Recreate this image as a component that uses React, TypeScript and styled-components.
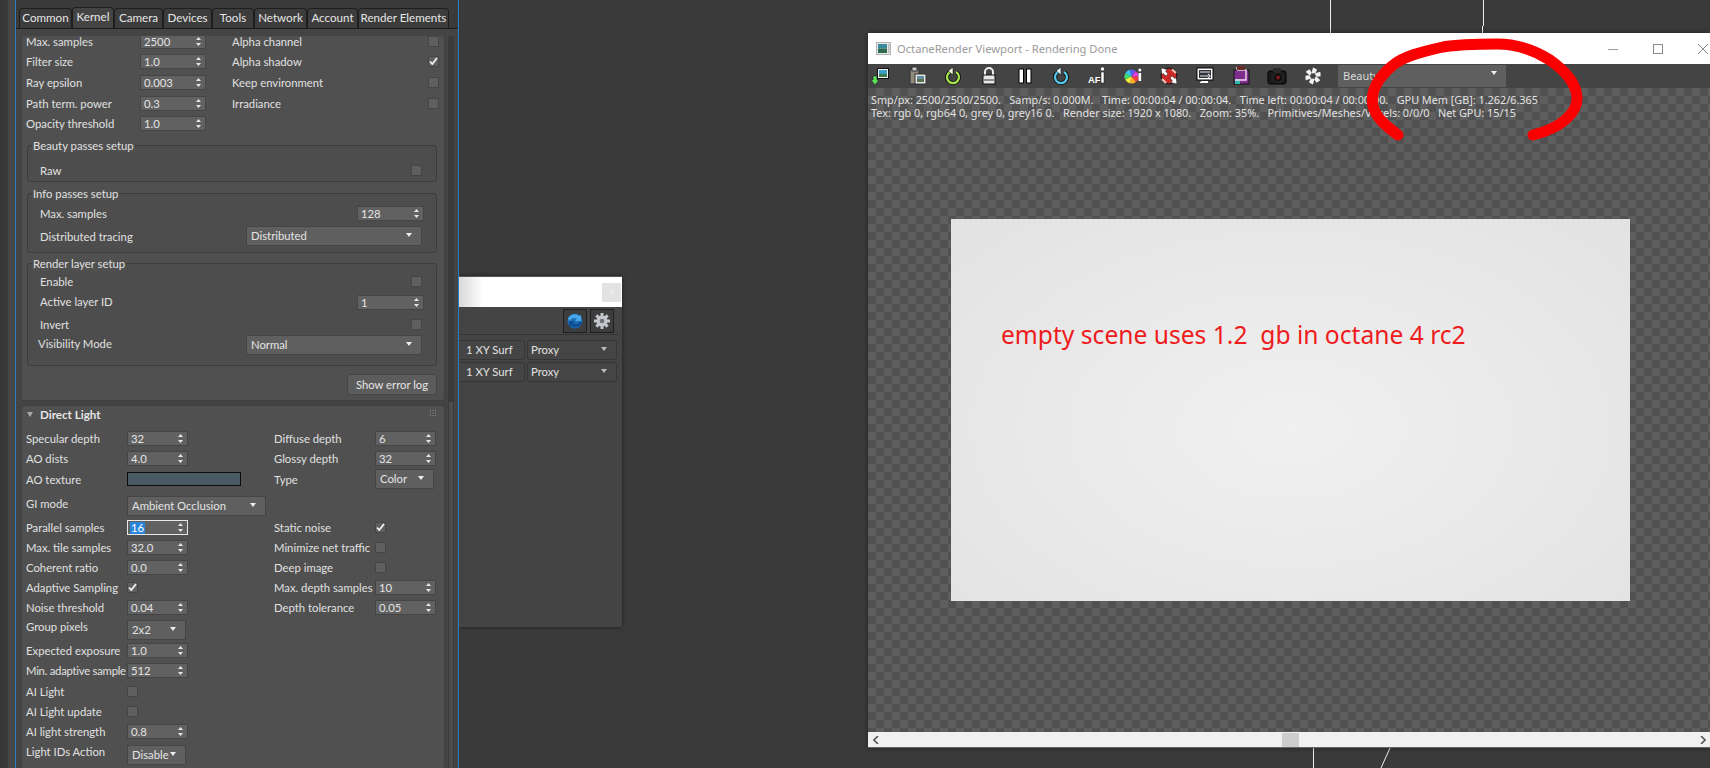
import React from "react";
import styled, { createGlobalStyle } from "styled-components";

const Global = createGlobalStyle`
  html, body { margin: 0; padding: 0; width: 1710px; height: 768px; overflow: hidden; background: #3a3a3a; }
  #root { width: 1710px; height: 768px; }
  * { box-sizing: border-box; }
`;

const Desktop = styled.div`
  position: relative;
  width: 1710px;
  height: 768px;
  overflow: hidden;
  background: #3a3a3a;
  font-family: "Lato", "Noto Sans", sans-serif;
  font-size: 11.3px;
  color: #e0e0e0;
`;

const Wires = styled.svg`
  position: absolute;
  inset: 0;
  width: 1710px;
  height: 768px;
`;

const Scribble = styled.svg`
  position: absolute;
  inset: 0;
  width: 1710px;
  height: 768px;
  pointer-events: none;
  z-index: 3;
`;

/* ---------- command panel ---------- */
const PanelWindow = styled.div`
  position: absolute;
  left: 0;
  top: 0;
  width: 459px;
  height: 768px;
  display: flex;
  z-index: 2;
`;

const Gutter = styled.div`
  width: 15px;
  background: linear-gradient(90deg, #353535 0, #3a3a3a 8px, #464646 8px, #464646 100%);
`;

const PanelInner = styled.div`
  flex: 1;
  min-width: 0;
  display: flex;
  flex-direction: column;
  background: #444;
  border-left: 1px solid #2b7dc4;
  border-right: 1px solid #2b7dc4;
`;

const TabBar = styled.div`
  height: 29px;
  flex: none;
  display: flex;
  align-items: flex-end;
  padding-left: 3px;
  background: #3a3a3a;
  border-bottom: 1px solid #1e1e1e;
`;

const Tab = styled.div<{ $w: number; $active?: boolean }>`
  width: ${(p) => p.$w}px;
  height: ${(p) => (p.$active ? 21 : 20)}px;
  line-height: 17px;
  text-align: center;
  font-size: 11.6px;
  color: #e6e6e6;
  white-space: nowrap;
  background: ${(p) => (p.$active ? "#444" : "#3c3c3c")};
  border: 1px solid #1e1e1e;
  border-bottom: none;
  border-radius: 4px 4px 0 0;
`;

const PanelBody = styled.div`
  flex: 1;
  min-height: 0;
  display: flex;
  padding: 7px 0 0 5px;
  overflow: hidden;
`;

const RolloutStack = styled.div`
  width: 424px;
  flex: none;
  display: flex;
  flex-direction: column;
  gap: 4px;
`;

const Rollout = styled.div`
  flex: none;
  background: #505050;
  border: 1px solid #404040;
  border-radius: 3px;
  overflow: hidden;
`;

const TopRollout = styled(Rollout)`
  border-top: none;
  padding: 0 0 5px 0;
`;

const BottomRollout = styled(Rollout)`
  flex: 1;
  border-bottom: none;
`;

const ClippedTop = styled.div`
  margin-top: -5px;
  padding-left: 4px;
`;

const ScrollTrack = styled.div`
  width: 6px;
  flex: none;
  margin-left: 3px;
  background: #3a3a3a;
  position: relative;
`;

const ScrollThumb = styled.div`
  position: absolute;
  left: 1px;
  top: 366px;
  width: 4px;
  height: 400px;
  background: #4d4d4d;
`;

const Row = styled.div<{ $h: number; $cols: string }>`
  height: ${(p) => p.$h}px;
  display: grid;
  grid-template-columns: ${(p) => p.$cols};
  align-items: center;
`;

const Label = styled.div`
  white-space: nowrap;
  color: #e0e0e0;
  line-height: 14px;
  padding-top: 1px;
`;

const TightLabel = styled(Label)`
  letter-spacing: -0.25px;
`;

const Nudged = styled(Label)<{ $y: number; $x?: number }>`
  margin-top: ${(p) => p.$y}px;
  margin-left: ${(p) => p.$x ?? 0}px;
`;

const SpinBox = styled.div<{ $focus?: boolean }>`
  position: relative;
  height: 15px;
  line-height: 13px;
  padding-left: 3px;
  background: #616161;
  border: 1px solid ${(p) => (p.$focus ? "#e8e8e8" : "#454545")};
  color: #e4e4e4;
  white-space: nowrap;
`;

const SpinArrows = styled.svg`
  position: absolute;
  right: 4px;
  top: 2px;
  width: 5px;
  height: 9px;
`;

const Selected = styled.span`
  display: inline-block;
  background: #2a86d8;
  color: #fff;
  line-height: 12px;
  padding: 0 1px;
  margin-left: -1px;
`;

const Spinner = ({ value, focus }: { value: string; focus?: boolean }) => (
  <SpinBox $focus={focus}>
    {focus ? <Selected>{value}</Selected> : value}
    <SpinArrows viewBox="0 0 5 9">
      <path d="M2.5 0 5 3H0zM0 6h5L2.5 9z" fill="#e6e6e6" />
    </SpinArrows>
  </SpinBox>
);

const DropBox = styled.div<{ $mt?: number }>`
  position: relative;
  height: 20px;
  margin-top: ${(p) => p.$mt ?? 0}px;
  line-height: 18px;
  padding-left: 4px;
  background: #5f5f5f;
  border: 1px solid #454545;
  color: #e4e4e4;
  white-space: nowrap;
`;

const DropArrow = styled.svg`
  position: absolute;
  right: 9px;
  top: 6px;
  width: 6px;
  height: 4px;
`;

const Dropdown = ({ value, mt }: { value: string; mt?: number }) => (
  <DropBox $mt={mt}>
    {value}
    <DropArrow viewBox="0 0 6 4">
      <path d="M0 0h6L3 4z" fill="#eee" />
    </DropArrow>
  </DropBox>
);

const CheckBox = styled.div<{ $end?: boolean }>`
  width: 11px;
  height: 11px;
  display: flex;
  align-items: center;
  justify-content: center;
  background: #5f5f5f;
  border: 1px solid #454545;
  justify-self: ${(p) => (p.$end ? "end" : "start")};
  margin-right: ${(p) => (p.$end ? "2px" : "0")};
`;

const Tick = styled.svg`
  width: 9px;
  height: 8px;
`;

const Check = ({ on, end }: { on?: boolean; end?: boolean }) => (
  <CheckBox $end={end}>
    {on && (
      <Tick viewBox="0 0 9 8">
        <path d="M1 4.5 3.3 7 8 1" fill="none" stroke="#f2f2f2" strokeWidth="1.8" />
      </Tick>
    )}
  </CheckBox>
);

const GroupBox = styled.div<{ $mt: number; $pt: number; $pb: number }>`
  position: relative;
  margin: ${(p) => p.$mt}px 7px 0 5px;
  padding: ${(p) => p.$pt}px 12px ${(p) => p.$pb}px 12px;
  border: 1px solid #3c3c3c;
  border-radius: 3px;
  background: #4d4d4d;
`;

const GroupTitle = styled.div`
  position: absolute;
  top: -7px;
  left: 4px;
  padding: 0 1px;
  line-height: 14px;
  background: #505050;
  color: #e0e0e0;
  white-space: nowrap;
`;

const EndSpin = styled.div`
  width: 67px;
  justify-self: end;
`;

const EndDrop = styled.div`
  width: 176px;
  justify-self: end;
  margin-right: 2px;
`;

const ButtonRow = styled.div`
  display: flex;
  justify-content: flex-end;
  margin: 8px 7px 0 0;
`;

const ErrorButton = styled.div`
  width: 90px;
  height: 21px;
  line-height: 19px;
  text-align: center;
  background: #5c5c5c;
  border: 1px solid #464646;
  border-radius: 3px;
  color: #e4e4e4;
  white-space: nowrap;
`;

const RolloutHeader = styled.div`
  height: 22px;
  display: flex;
  align-items: center;
  padding: 0 8px 5px 4px;
`;

const Triangle = styled.svg`
  width: 6px;
  height: 5px;
  margin-left: 1px;
`;

const RolloutTitle = styled.div`
  margin-left: 7px;
  font-weight: 700;
  color: #e6e6e6;
  font-size: 11.6px;
`;

const Grip = styled.svg`
  margin-left: auto;
  margin-top: -4px;
  width: 6px;
  height: 6px;
`;

const Columns = styled.div`
  display: grid;
  grid-template-columns: 248px 1fr;
  padding-left: 4px;
`;

const ColorSwatch = styled.div`
  width: 114px;
  height: 14px;
  background: #4a5a63;
  border: 1px solid #0c0c0c;
`;

const leftCols = "101px 61px";
const topCols = "114px 66px 26px 196px 11px";
const groupCols = "1fr auto";

/* ---------- rear dialog ---------- */
const RearDialog = styled.div`
  position: absolute;
  left: 459px;
  top: 276px;
  width: 163px;
  height: 351px;
  background: #444;
  border-top: 1px solid #555;
  box-shadow: 0 0 4px rgba(0, 0, 0, 0.5);
  z-index: 1;
  display: flex;
  flex-direction: column;
`;

const RearTitle = styled.div`
  height: 30px;
  flex: none;
  display: flex;
  justify-content: flex-end;
  align-items: center;
  padding: 0 1px 0 0;
  background: linear-gradient(90deg, #d8d8d8 0, #fff 24px);
`;

const RearClose = styled.div`
  width: 19px;
  height: 19px;
  line-height: 17px;
  text-align: center;
  font-size: 10px;
  background: #e2e2e2;
  color: #f2f2f2;
`;

const RearTools = styled.div`
  height: 28px;
  flex: none;
  display: flex;
  justify-content: flex-end;
  align-items: center;
  gap: 3px;
  margin-right: 4px;
  padding-right: 4px;
  border-bottom: 1px solid #343434;
`;

const RearButton = styled.div`
  width: 24px;
  height: 24px;
  display: flex;
  align-items: center;
  justify-content: center;
  background: #3d3d3d;
  border: 1px solid #1f1f1f;
`;

const RearRows = styled.div`
  display: flex;
  flex-direction: column;
  gap: 2px;
  padding-top: 5px;
`;

const RearRow = styled.div`
  display: flex;
  gap: 2px;
  height: 20px;
`;

const SurfField = styled.div`
  width: 66px;
  line-height: 18px;
  padding-left: 7px;
  background: #454545;
  border: 1px solid #363636;
  border-left: none;
  border-radius: 0 3px 3px 0;
  white-space: nowrap;
  color: #e2e2e2;
`;

const ProxyField = styled.div`
  position: relative;
  width: 90px;
  line-height: 18px;
  padding-left: 3px;
  background: #454545;
  border: 1px solid #363636;
  border-radius: 3px;
  color: #e2e2e2;
`;

/* ---------- viewport window ---------- */
const ViewportWindow = styled.div`
  position: absolute;
  left: 868px;
  top: 33px;
  width: 842px;
  height: 715px;
  display: flex;
  flex-direction: column;
  overflow: hidden;
  z-index: 1;
  box-shadow: 0 0 5px rgba(0, 0, 0, 0.45);
  font-family: "Noto Sans", sans-serif;
`;

const TitleBar = styled.div`
  height: 31px;
  flex: none;
  background: #fff;
  display: flex;
  align-items: center;
  padding-left: 8px;
`;

const TitleText = styled.div`
  margin-left: 6px;
  color: #9a9a9a;
  font-size: 11.2px;
  white-space: nowrap;
`;

const WinButtons = styled.div`
  margin-left: auto;
  margin-right: -15px;
  display: flex;
`;

const WinButton = styled.div`
  width: 45px;
  height: 31px;
  display: flex;
  align-items: center;
  justify-content: center;
`;

const Toolbar = styled.div`
  height: 24px;
  flex: none;
  background: #444;
  display: flex;
  align-items: center;
  gap: 16px;
  padding-left: 3px;
`;

const ToolIcon = styled.svg`
  width: 20px;
  height: 20px;
  flex: none;
`;

const PassSelect = styled.div`
  position: relative;
  width: 168px;
  height: 22px;
  margin-left: -1px;
  line-height: 21px;
  padding-left: 5px;
  background: #5f5f5f;
  color: #d8d8d8;
  font-size: 11px;
`;

const Stage = styled.div`
  flex: 1;
  min-height: 0;
  padding: 5px 0 0 3px;
  background-color: #515151;
  background-image: conic-gradient(#5e5e5e 25%, transparent 0 50%, #5e5e5e 0 75%, transparent 0);
  background-size: 16px 16px;
`;

const StatusLine = styled.div`
  height: 13px;
  line-height: 13px;
  font-size: 10.84px;
  color: #e2e2e2;
  white-space: pre;
`;

const RenderCanvas = styled.div`
  width: 679px;
  height: 382px;
  margin: 100px 0 0 80px;
  padding: 101px 0 0 50px;
  background: radial-gradient(ellipse at 50% 55%, #f0f0f0 0, #eaeaea 45%, #e2e2e2 100%);
`;

const Note = styled.div`
  color: #ee1c1c;
  font-size: 24.6px;
  line-height: 30px;
  white-space: pre;
`;

const HScroll = styled.div`
  position: relative;
  height: 16px;
  flex: none;
  background: #f0f0f0;
  border-bottom: 1px solid #666;
  display: flex;
  align-items: center;
  justify-content: space-between;
  padding: 0 4px 0 5px;
`;

const HThumb = styled.div`
  position: absolute;
  left: 414px;
  top: 1px;
  width: 17px;
  height: 14px;
  background: #cdcdcd;
`;

const ScrollArrow = styled.svg`
  width: 6px;
  height: 8px;
`;

const slices = ["#ff3b3b", "#ffb02e", "#f7f03a", "#45e06a", "#35c8f0", "#5a5af5", "#e23de0"];
const wheelPath = (i: number, n: number) => {
  const c = 8.5, r = 7;
  const a0 = (i / n) * Math.PI * 2, a1 = ((i + 1) / n) * Math.PI * 2;
  return `M${c} ${c + 2}L${c + r * Math.cos(a0)} ${c + 2 + r * Math.sin(a0)}A${r} ${r} 0 0 1 ${c + r * Math.cos(a1)} ${c + 2 + r * Math.sin(a1)}Z`;
};

const Icons = {
  Export: () => (
    <ToolIcon viewBox="0 0 20 20">
      <rect x="6.5" y="2.5" width="11" height="10" fill="#f4f4f4" stroke="#111" />
      <rect x="8" y="4" width="8" height="4" fill="#3aa0c8" />
      <rect x="8" y="8" width="8" height="3" fill="#3f7a4a" />
      <path d="M2 10h4v4h2l-4 5-4-5h2z" fill="#5fe05a" stroke="#111" strokeWidth=".5" />
    </ToolIcon>
  ),
  Paste: () => (
    <ToolIcon viewBox="0 0 20 20">
      <rect x="3" y="3" width="9" height="15" fill="#8f8a7c" stroke="#2c2c2c" />
      <rect x="5" y="1" width="5" height="4" fill="#ccc" stroke="#333" />
      <rect x="8" y="8" width="11" height="10" fill="#e4e4e4" stroke="#333" />
      <rect x="10" y="10" width="7" height="3" fill="#5f8ea0" />
      <rect x="10" y="13" width="7" height="3" fill="#57704e" />
    </ToolIcon>
  ),
  RedoGreen: () => (
    <ToolIcon viewBox="0 0 20 20">
      <path d="M7 6a6 6 0 1 0 6 0" fill="none" stroke="#111" strokeWidth="4" />
      <path d="M7 6a6 6 0 1 0 6 0" fill="none" stroke="#a6e84a" strokeWidth="2.2" />
      <path d="M10 1v8L5 5z" fill="#eaf7d0" stroke="#111" strokeWidth=".6" />
    </ToolIcon>
  ),
  Lock: () => (
    <ToolIcon viewBox="0 0 20 20">
      <path d="M6 9V6a4 4 0 0 1 8 0v3" fill="none" stroke="#eee" strokeWidth="2" />
      <rect x="4" y="9" width="12" height="9" fill="#e8e8e8" stroke="#111" />
      <rect x="5" y="13" width="10" height="2" fill="#8a8a8a" />
    </ToolIcon>
  ),
  Pause: () => (
    <ToolIcon viewBox="0 0 20 20">
      <rect x="4" y="3" width="4.5" height="14" fill="#fff" stroke="#000" />
      <rect x="11.5" y="3" width="4.5" height="14" fill="#fff" stroke="#000" />
    </ToolIcon>
  ),
  RedoBlue: () => (
    <ToolIcon viewBox="0 0 20 20">
      <path d="M7 6a6 6 0 1 0 6 0" fill="none" stroke="#111" strokeWidth="4" />
      <path d="M7 6a6 6 0 1 0 6 0" fill="none" stroke="#55c8e8" strokeWidth="2.2" />
      <path d="M10 1v8L5 5z" fill="#dff4fa" stroke="#111" strokeWidth=".6" />
    </ToolIcon>
  ),
  AFi: () => (
    <ToolIcon viewBox="0 0 20 20">
      <text x="1" y="17" fontFamily="Liberation Sans, sans-serif" fontSize="9.5" fontWeight="700" fill="#fff">AF</text>
      <rect x="14" y="6" width="3" height="11" fill="#fff" stroke="#111" strokeWidth=".5" />
      <circle cx="15.5" cy="3" r="1.7" fill="#fff" />
    </ToolIcon>
  ),
  Wheel: () => (
    <ToolIcon viewBox="0 0 20 20">
      {slices.map((c, i) => (
        <path key={c} d={wheelPath(i, slices.length)} fill={c} />
      ))}
      <rect x="15.5" y="7" width="2.6" height="8" fill="#fff" />
      <circle cx="16.8" cy="4" r="1.5" fill="#fff" />
    </ToolIcon>
  ),
  Sphere: () => (
    <ToolIcon viewBox="0 0 20 20">
      <circle cx="10" cy="10" r="8" fill="#c92a26" stroke="#111" />
      <path d="M13 3.5 17 7M3 13l4 4" stroke="#f3c4b8" strokeWidth="2" />
      <path d="M2 2l6.5 1.5-2 1.5 2.5 3-2 2-3-2.5L3 9zM18 18l-6.500-1.500 2-1.500-2.500-3 2-2 3 2.500L17 11z" fill="#fff" stroke="#111" strokeWidth=".5" />
    </ToolIcon>
  ),
  Monitor: () => (
    <ToolIcon viewBox="0 0 20 20">
      <rect x="2" y="2" width="16" height="12" fill="#fff" stroke="#000" />
      <rect x="4" y="4" width="12" height="8" fill="#2a2f38" />
      <path d="M5 6h10M5 10h8M13 8l2 2-2 2" stroke="#e8e8e8" strokeWidth="1.2" fill="none" />
      <path d="M7 15h6v2H5v-1z" fill="#fff" />
    </ToolIcon>
  ),
  Crop: () => (
    <ToolIcon viewBox="0 0 20 20">
      <rect x="3" y="4" width="15" height="14" fill="#7f2d8c" stroke="#111" />
      <rect x="4" y="13" width="5" height="5" fill="#2fb7a8" />
      <path d="M6 1v3M6 4h9v10H4" fill="none" stroke="#f4d8ea" strokeWidth="1.4" />
      <path d="M6 1a4 4 0 0 1 8 0v3H6z" fill="#6a2b2b" />
    </ToolIcon>
  ),
  Camera: () => (
    <ToolIcon viewBox="0 0 20 20">
      <rect x="1" y="5" width="18" height="13" rx="2" fill="#1a1a1a" stroke="#000" />
      <rect x="6" y="2" width="8" height="4" fill="#2a2a2a" />
      <circle cx="11" cy="11.500" r="5" fill="#111" stroke="#333" />
      <circle cx="11" cy="11.500" r="2" fill="#7a1a1a" />
    </ToolIcon>
  ),
  Octane: () => (
    <ToolIcon viewBox="0 0 20 20">
      {[0, 60, 120, 180, 240, 300].map((a) => (
        <path key={a} d="M8.500 7.500 10 1.500 14 3.500 12.500 7z" fill="#f2f2f2" transform={`rotate(${a} 10 10)`} />
      ))}
    </ToolIcon>
  ),
};

const tabs: [string, number, boolean?][] = [
  ["Common", 53],
  ["Kernel", 42, true],
  ["Camera", 49],
  ["Devices", 49],
  ["Tools", 42],
  ["Network", 53],
  ["Account", 51],
  ["Render Elements", 91],
];

const Field = ({ label, children, h = 20 }: { label?: string; children?: React.ReactNode; h?: number }) => (
  <Row $h={h} $cols={leftCols}>
    <Label>{label}</Label>
    {children}
  </Row>
);

export default function App() {
  return (
    <Desktop>
      <Global />
      <Wires viewBox="0 0 1710 768">
        <path d="M1330.500 0v33M1483.500 0v26M1482.500 26v7M1313.500 748v20M1390 748l-9 20" stroke="#eee" strokeWidth="1" fill="none" />
      </Wires>

      <PanelWindow>
        <Gutter />
        <PanelInner>
          <TabBar>
            {tabs.map(([t, w, a]) => (
              <Tab key={t} $w={w} $active={a}>{t}</Tab>
            ))}
          </TabBar>
          <PanelBody>
            <RolloutStack>
              <TopRollout>
                <ClippedTop>
                  <Row $h={20} $cols={topCols}>
                    <Label>Max. samples</Label>
                    <Spinner value="2500" />
                    <span />
                    <Label>Alpha channel</Label>
                    <Check />
                  </Row>
                  <Row $h={20} $cols={topCols}>
                    <Label>Filter size</Label>
                    <Spinner value="1.0" />
                    <span />
                    <Label>Alpha shadow</Label>
                    <Check on />
                  </Row>
                  <Row $h={22} $cols={topCols}>
                    <Label>Ray epsilon</Label>
                    <Spinner value="0.003" />
                    <span />
                    <Label>Keep environment</Label>
                    <Check />
                  </Row>
                  <Row $h={20} $cols={topCols}>
                    <Label>Path term. power</Label>
                    <Spinner value="0.3" />
                    <span />
                    <Label>Irradiance</Label>
                    <Check />
                  </Row>
                  <Row $h={21} $cols={topCols}>
                    <Label>Opacity threshold</Label>
                    <Spinner value="1.0" />
                  </Row>
                </ClippedTop>

                <GroupBox $mt={11} $pt={16} $pb={3}>
                  <GroupTitle>Beauty passes setup</GroupTitle>
                  <Row $h={16} $cols={groupCols}>
                    <Label>Raw</Label>
                    <Check end />
                  </Row>
                </GroupBox>

                <GroupBox $mt={11} $pt={11} $pb={1}>
                  <GroupTitle>Info passes setup</GroupTitle>
                  <Row $h={16} $cols={groupCols}>
                    <Label>Max. samples</Label>
                    <EndSpin><Spinner value="128" /></EndSpin>
                  </Row>
                  <Row $h={30} $cols={groupCols}>
                    <Label>Distributed tracing</Label>
                    <EndDrop><Dropdown value="Distributed" /></EndDrop>
                  </Row>
                </GroupBox>

                <GroupBox $mt={10} $pt={9} $pb={8}>
                  <GroupTitle>Render layer setup</GroupTitle>
                  <Row $h={16} $cols={groupCols}>
                    <Label>Enable</Label>
                    <Check end />
                  </Row>
                  <Row $h={26} $cols={groupCols}>
                    <Nudged $y={-2}>Active layer ID</Nudged>
                    <EndSpin><Spinner value="1" /></EndSpin>
                  </Row>
                  <Row $h={18} $cols={groupCols}>
                    <Label>Invert</Label>
                    <Check end />
                  </Row>
                  <Row $h={24} $cols={groupCols}>
                    <Nudged $y={-4} $x={-2}>Visibility Mode</Nudged>
                    <EndDrop><Dropdown value="Normal" /></EndDrop>
                  </Row>
                </GroupBox>

                <ButtonRow>
                  <ErrorButton>Show error log</ErrorButton>
                </ButtonRow>
              </TopRollout>

              <BottomRollout>
                <RolloutHeader>
                  <Triangle viewBox="0 0 6 5"><path d="M0 0h6L3 5z" fill="#aaa" /></Triangle>
                  <RolloutTitle>Direct Light</RolloutTitle>
                  <Grip viewBox="0 0 6 6">
                    <path d="M0 0h1v1H0zM2.500 0h1v1h-1zM5 0h1v1H5zM0 2.500h1v1H0zM2.500 2.500h1v1h-1zM5 2.500h1v1H5zM0 5h1v1H0zM2.500 5h1v1h-1zM5 5h1v1H5z" fill="#8a8a8a" />
                  </Grip>
                </RolloutHeader>
                <Columns>
                  <div>
                    <Field label="Specular depth"><Spinner value="32" /></Field>
                    <Field label="AO dists"><Spinner value="4.0" /></Field>
                    <Field label="AO texture" h={22}><ColorSwatch /></Field>
                    <Row $h={27} $cols="101px 139px">
                      <Label>GI mode</Label>
                      <Dropdown value="Ambient Occlusion" mt={4} />
                    </Row>
                    <Field label="Parallel samples"><Spinner value="16" focus /></Field>
                    <Field label="Max. tile samples"><Spinner value="32.0" /></Field>
                    <Field label="Coherent ratio"><Spinner value="0.0" /></Field>
                    <Field label="Adaptive Sampling"><Check on /></Field>
                    <Field label="Noise threshold"><Spinner value="0.04" /></Field>
                    <Row $h={24} $cols="101px 59px">
                      <Nudged $y={-6}>Group pixels</Nudged>
                      <Dropdown value="2x2" mt={1} />
                    </Row>
                    <Field label="Expected exposure" h={19}><Spinner value="1.0" /></Field>
                    <Row $h={21} $cols={leftCols}>
                      <TightLabel>Min. adaptive sample</TightLabel>
                      <Spinner value="512" />
                    </Row>
                    <Field label="AI Light"><Check /></Field>
                    <Field label="AI Light update"><Check /></Field>
                    <Field label="AI light strength"><Spinner value="0.8" /></Field>
                    <Row $h={26} $cols="101px 59px">
                      <Nudged $y={-6}>Light IDs Action</Nudged>
                      <Dropdown value="Disable" mt={2} />
                    </Row>
                  </div>
                  <div>
                    <Field label="Diffuse depth"><Spinner value="6" /></Field>
                    <Field label="Glossy depth"><Spinner value="32" /></Field>
                    <Row $h={22} $cols="101px 59px">
                      <Label>Type</Label>
                      <Dropdown value="Color" />
                    </Row>
                    <Field h={27} />
                    <Field label="Static noise"><Check on /></Field>
                    <Field label="Minimize net traffic"><Check /></Field>
                    <Field label="Deep image"><Check /></Field>
                    <Field label="Max. depth samples"><Spinner value="10" /></Field>
                    <Field label="Depth tolerance"><Spinner value="0.05" /></Field>
                  </div>
                </Columns>
              </BottomRollout>
            </RolloutStack>
            <ScrollTrack><ScrollThumb /></ScrollTrack>
          </PanelBody>
        </PanelInner>
      </PanelWindow>

      <RearDialog>
        <RearTitle>
          <RearClose>x</RearClose>
        </RearTitle>
        <RearTools>
          <RearButton>
            <svg width="18" height="18" viewBox="0 0 18 18">
              <circle cx="9" cy="9" r="7.500" fill="#1d6fb8" />
              <path d="M2 7c1-4 7-6 11-3l2-1v6h-6l2-2C8 5 5 6 4 9z" fill="#4aa8e8" />
              <path d="M16 11c-1 4-7 6-11 3l-2 1V9h6l-2 2c3 2 6 1 7-2z" fill="#0f4f8f" />
            </svg>
          </RearButton>
          <RearButton>
            <svg width="18" height="18" viewBox="0 0 18 18">
              <g fill="#c4c8cc">
                {[0, 45, 90, 135, 180, 225, 270, 315].map((a) => (
                  <rect key={a} x="7.500" y="1" width="3" height="4" transform={`rotate(${a} 9 9)`} />
                ))}
                <circle cx="9" cy="9" r="5.500" />
              </g>
              <circle cx="9" cy="9" r="2.300" fill="#6d7074" />
            </svg>
          </RearButton>
        </RearTools>
        <RearRows>
          <RearRow>
            <SurfField>1 XY Surf</SurfField>
            <ProxyField>Proxy<DropArrow viewBox="0 0 6 4"><path d="M0 0h6L3 4z" fill="#bbb" /></DropArrow></ProxyField>
          </RearRow>
          <RearRow>
            <SurfField>1 XY Surf</SurfField>
            <ProxyField>Proxy<DropArrow viewBox="0 0 6 4"><path d="M0 0h6L3 4z" fill="#bbb" /></DropArrow></ProxyField>
          </RearRow>
        </RearRows>
      </RearDialog>

      <ViewportWindow>
        <TitleBar>
          <svg width="15" height="13" viewBox="0 0 15 13">
            <rect x=".5" y=".5" width="14" height="12" fill="#e8e8e8" stroke="#b4b4b4" />
            <rect x="2" y="2" width="9" height="4.500" fill="#3a8aa0" />
            <rect x="2" y="6.500" width="9" height="4.500" fill="#2f6a4a" />
            <rect x="12" y="2" width="1.500" height="9" fill="#bbb" />
          </svg>
          <TitleText>OctaneRender Viewport - Rendering Done</TitleText>
          <WinButtons>
            <WinButton><svg width="10" height="10"><path d="M0 5.500h10" stroke="#9a9a9a" /></svg></WinButton>
            <WinButton><svg width="10" height="10"><rect x=".5" y=".5" width="9" height="9" fill="none" stroke="#8a8a8a" /></svg></WinButton>
            <WinButton><svg width="10" height="10"><path d="M0 0l10 10M10 0 0 10" stroke="#8a8a8a" /></svg></WinButton>
          </WinButtons>
        </TitleBar>
        <Toolbar>
          <Icons.Export />
          <Icons.Paste />
          <Icons.RedoGreen />
          <Icons.Lock />
          <Icons.Pause />
          <Icons.RedoBlue />
          <Icons.AFi />
          <Icons.Wheel />
          <Icons.Sphere />
          <Icons.Monitor />
          <Icons.Crop />
          <Icons.Camera />
          <Icons.Octane />
          <PassSelect>
            Beauty
            <DropArrow viewBox="0 0 6 4"><path d="M0 0h6L3 4z" fill="#eee" /></DropArrow>
          </PassSelect>
        </Toolbar>
        <Stage>
          <StatusLine>{"Smp/px: 2500/2500/2500.   Samp/s: 0.000M.   Time: 00:00:04 / 00:00:04.   Time left: 00:00:04 / 00:00:00.   GPU Mem [GB]: 1.262/6.365"}</StatusLine>
          <StatusLine>{"Tex: rgb 0, rgb64 0, grey 0, grey16 0.   Render size: 1920 x 1080.   Zoom: 35%.   Primitives/Meshes/Voxels: 0/0/0   Net GPU: 15/15"}</StatusLine>
          <RenderCanvas>
            <Note>{"empty scene uses 1.2  gb in octane 4 rc2"}</Note>
          </RenderCanvas>
        </Stage>
        <HScroll>
          <ScrollArrow viewBox="0 0 6 8"><path d="M5 0 1 4l4 4" fill="none" stroke="#555" strokeWidth="1.6" /></ScrollArrow>
          <HThumb />
          <ScrollArrow viewBox="0 0 6 8"><path d="m1 0 4 4-4 4" fill="none" stroke="#555" strokeWidth="1.6" /></ScrollArrow>
        </HScroll>
      </ViewportWindow>

      <Scribble viewBox="0 0 1710 768">
        <path
          d="M1398 135C1386 126 1376 118 1373 106C1370 92 1378 78 1392 66C1402 57 1420 52 1443 47C1460 44 1480 44 1497 44C1518 44 1534 50 1550 60C1564 70 1576 82 1577 97C1578 112 1562 128 1533 135"
          fill="none"
          stroke="#fa0000"
          strokeWidth="11"
          strokeLinecap="round"
        />
      </Scribble>
    </Desktop>
  );
}
